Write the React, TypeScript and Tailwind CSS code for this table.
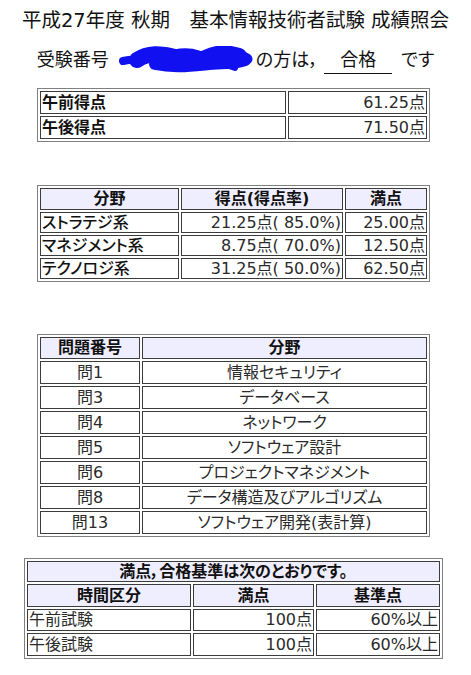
import React from "react";

const FONT =
  "font-['DejaVu_Sans','Noto_Sans_CJK_JP',sans-serif] [font-feature-settings:'palt']";

function Cell({
  children,
  className = "",
}: {
  children?: React.ReactNode;
  className?: string;
}) {
  return (
    <div
      className={
        "border border-[#3c3c3c] flex items-center text-[16px] leading-none px-[1px] whitespace-nowrap " +
        className
      }
    >
      {children}
    </div>
  );
}

function Scribble() {
  return (
    <svg width="134" height="28" viewBox="0 0 134 28" className="block">
      <g fill="none" stroke="#1010f0" strokeLinecap="round" strokeLinejoin="round">
        <path d="M4 15 Q 12 13 22 14" strokeWidth="8" />
        <path d="M18 14 C 30 6, 42 8, 52 10 S 72 18, 86 12 S 106 6, 120 10" strokeWidth="16" />
        <path d="M36 18 C 55 22, 70 20, 90 18 S 115 18, 126 14" strokeWidth="12" />
        <path d="M100 9 C 110 7, 122 9, 128 13" strokeWidth="11" />
        <path d="M56 7 Q 68 4 80 8" strokeWidth="7" />
        <path d="M110 20 L 116 22" strokeWidth="6" />
      </g>
    </svg>
  );
}

export default function App() {
  return (
    <div className={"w-[471px] h-[675px] bg-white text-black " + FONT}>
      {/* Title */}
      <div className="h-[40px] flex items-center justify-center text-[19.5px] leading-none text-[#111] pt-[1px]">
        平成27年度 秋期　基本情報技術者試験 成績照会
      </div>
      {/* Line 2 */}
      <div className="h-[40px] flex items-center justify-center text-[18px] leading-none text-[#111]">
        <span>受験番号</span>
        <span className="ml-[10px] mr-[3px]">
          <Scribble />
        </span>
        <span>の方は，</span>
        <span className="ml-[6px] inline-block border-b border-[#111] px-[16px] pb-[4px] mt-[4px]">
          合格
        </span>
        <span className="ml-[9px]">です</span>
      </div>

      {/* Table 1 */}
      <div className="mt-[8px] ml-[37px] w-[393px] border border-[#808080] p-[2px] grid grid-cols-[246px_139px] gap-[2px]">
        <Cell className="h-[23px] font-bold text-[#111]">午前得点</Cell>
        <Cell className="h-[23px] justify-end text-[#2a2a2a]">61.25点</Cell>
        <Cell className="h-[23px] font-bold text-[#111]">午後得点</Cell>
        <Cell className="h-[23px] justify-end text-[#2a2a2a]">71.50点</Cell>
      </div>

      {/* Table 2 */}
      <div className="mt-[43px] ml-[37px] w-[393px] border border-[#808080] p-[2px] grid grid-cols-[139px_162px_82px] gap-[2px]">
        <Cell className="h-[22px] justify-center font-bold bg-[#eeeeff] text-[#111]">分野</Cell>
        <Cell className="h-[22px] justify-center font-bold bg-[#eeeeff] text-[#111]">得点(得点率)</Cell>
        <Cell className="h-[22px] justify-center font-bold bg-[#eeeeff] text-[#111]">満点</Cell>

        <Cell className="h-[21px] font-medium text-[#111]">ストラテジ系</Cell>
        <Cell className="h-[21px] justify-end text-[#2a2a2a]">21.25点( 85.0%)</Cell>
        <Cell className="h-[21px] justify-end text-[#2a2a2a]">25.00点</Cell>

        <Cell className="h-[21px] font-medium text-[#111]">マネジメント系</Cell>
        <Cell className="h-[21px] justify-end text-[#2a2a2a]">8.75点( 70.0%)</Cell>
        <Cell className="h-[21px] justify-end text-[#2a2a2a]">12.50点</Cell>

        <Cell className="h-[21px] font-medium text-[#111]">テクノロジ系</Cell>
        <Cell className="h-[21px] justify-end text-[#2a2a2a]">31.25点( 50.0%)</Cell>
        <Cell className="h-[21px] justify-end text-[#2a2a2a]">62.50点</Cell>
      </div>

      {/* Table 3 */}
      <div className="mt-[52px] ml-[37px] w-[393px] border border-[#808080] p-[2px] grid grid-cols-[100px_285px] gap-[2px]">
        <Cell className="h-[22px] justify-center font-bold bg-[#eeeeff] text-[#111]">問題番号</Cell>
        <Cell className="h-[22px] justify-center font-bold bg-[#eeeeff] text-[#111]">分野</Cell>
        {[
          ["問1", "情報セキュリティ"],
          ["問3", "データベース"],
          ["問4", "ネットワーク"],
          ["問5", "ソフトウェア設計"],
          ["問6", "プロジェクトマネジメント"],
          ["問8", "データ構造及びアルゴリズム"],
          ["問13", "ソフトウェア開発(表計算)"],
        ].map(([a, b]) => (
          <React.Fragment key={a}>
            <Cell className="h-[23px] justify-center text-[#2a2a2a]">{a}</Cell>
            <Cell className="h-[23px] justify-center text-[#2a2a2a]">{b}</Cell>
          </React.Fragment>
        ))}
      </div>

      {/* Table 4 */}
      <div className="mt-[21px] ml-[24px] w-[419px] border border-[#808080] p-[2px] grid grid-cols-[164px_121px_124px] gap-[2px]">
        <Cell className="col-span-3 h-[21px] justify-center font-bold bg-[#eeeeff] text-[#111]">
          満点，合格基準は次のとおりです。
        </Cell>
        <Cell className="h-[23px] justify-center font-bold bg-[#eeeeff] text-[#111]">時間区分</Cell>
        <Cell className="h-[23px] justify-center font-bold bg-[#eeeeff] text-[#111]">満点</Cell>
        <Cell className="h-[23px] justify-center font-bold bg-[#eeeeff] text-[#111]">基準点</Cell>

        <Cell className="h-[22px] text-[#2a2a2a]">午前試験</Cell>
        <Cell className="h-[22px] justify-end text-[#2a2a2a]">100点</Cell>
        <Cell className="h-[22px] justify-end text-[#2a2a2a]">60%以上</Cell>

        <Cell className="h-[23px] text-[#2a2a2a]">午後試験</Cell>
        <Cell className="h-[23px] justify-end text-[#2a2a2a]">100点</Cell>
        <Cell className="h-[23px] justify-end text-[#2a2a2a]">60%以上</Cell>
      </div>
    </div>
  );
}
